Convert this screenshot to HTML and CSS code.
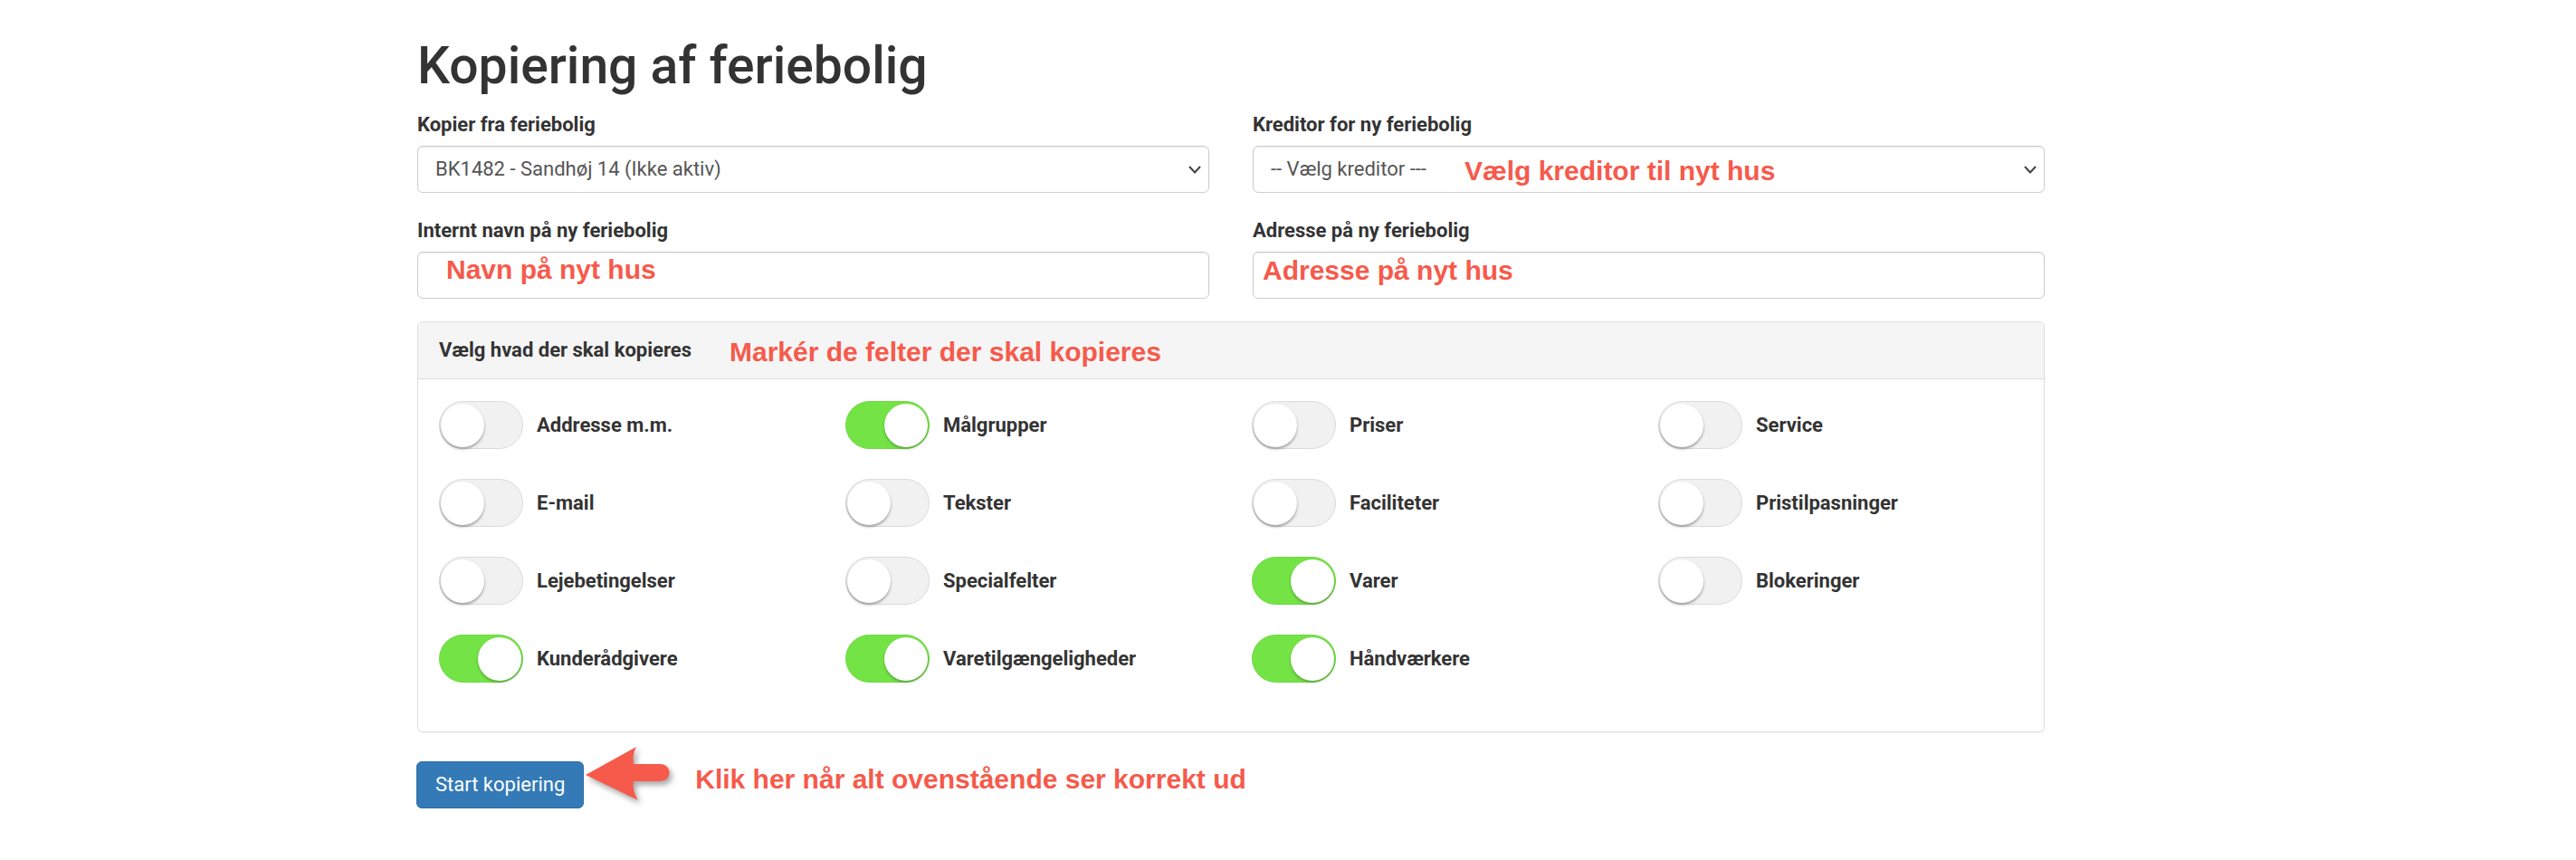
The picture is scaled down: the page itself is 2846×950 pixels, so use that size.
FILE: index.html
```html
<!DOCTYPE html>
<html lang="da">
<head>
<meta charset="utf-8">
<title>Kopiering af feriebolig</title>
<link rel="stylesheet" href="styles.css">
</head>
<body>
<div class="page">
  <h1 class="title">Kopiering af feriebolig</h1>

  <div class="form-grid">
    <div class="field">
      <div class="field-label">Kopier fra feriebolig</div>
      <div class="control select">
        <span class="value">BK1482 - Sandhøj 14 (Ikke aktiv)</span>
        <svg class="chevron" width="14" height="9" viewBox="0 0 14 9"><polyline points="1,1 7,7.5 13,1" fill="none" stroke="#444" stroke-width="2"/></svg>
      </div>
    </div>
    <div class="field">
      <div class="field-label">Kreditor for ny feriebolig</div>
      <div class="control select">
        <span class="value">-- Vælg kreditor ---</span>
        <svg class="chevron" width="14" height="9" viewBox="0 0 14 9"><polyline points="1,1 7,7.5 13,1" fill="none" stroke="#444" stroke-width="2"/></svg>
        <span class="note note-kreditor">Vælg kreditor til nyt hus</span>
      </div>
    </div>
    <div class="field">
      <div class="field-label">Internt navn på ny feriebolig</div>
      <div class="control">
        <span class="note note-navn">Navn på nyt hus</span>
      </div>
    </div>
    <div class="field">
      <div class="field-label">Adresse på ny feriebolig</div>
      <div class="control">
        <span class="note note-adresse">Adresse på nyt hus</span>
      </div>
    </div>
  </div>

  <section class="panel">
    <div class="panel-head">
      <span class="panel-title">Vælg hvad der skal kopieres</span>
      <span class="note note-head">Markér de felter der skal kopieres</span>
    </div>
    <div class="panel-body">
      <div class="opt"><span class="toggle"><span class="knob"></span></span><span class="opt-label">Addresse m.m.</span></div>
      <div class="opt"><span class="toggle on"><span class="knob"></span></span><span class="opt-label">Målgrupper</span></div>
      <div class="opt"><span class="toggle"><span class="knob"></span></span><span class="opt-label">Priser</span></div>
      <div class="opt"><span class="toggle"><span class="knob"></span></span><span class="opt-label">Service</span></div>

      <div class="opt"><span class="toggle"><span class="knob"></span></span><span class="opt-label">E-mail</span></div>
      <div class="opt"><span class="toggle"><span class="knob"></span></span><span class="opt-label">Tekster</span></div>
      <div class="opt"><span class="toggle"><span class="knob"></span></span><span class="opt-label">Faciliteter</span></div>
      <div class="opt"><span class="toggle"><span class="knob"></span></span><span class="opt-label">Pristilpasninger</span></div>

      <div class="opt"><span class="toggle"><span class="knob"></span></span><span class="opt-label">Lejebetingelser</span></div>
      <div class="opt"><span class="toggle"><span class="knob"></span></span><span class="opt-label">Specialfelter</span></div>
      <div class="opt"><span class="toggle on"><span class="knob"></span></span><span class="opt-label">Varer</span></div>
      <div class="opt"><span class="toggle"><span class="knob"></span></span><span class="opt-label">Blokeringer</span></div>

      <div class="opt"><span class="toggle on"><span class="knob"></span></span><span class="opt-label">Kunderådgivere</span></div>
      <div class="opt"><span class="toggle on"><span class="knob"></span></span><span class="opt-label">Varetilgængeligheder</span></div>
      <div class="opt"><span class="toggle on"><span class="knob"></span></span><span class="opt-label">Håndværkere</span></div>
    </div>
  </section>

  <div class="actions">
    <button class="btn-primary" type="button">Start kopiering</button>
    <svg class="arrow" width="100" height="75" viewBox="0 0 100 75">
      <path d="M2,34 L58,3 Q53,13 55,22 L85,22 A9.5,9.5 0 0 1 85,41 L55,41 Q53,51 60,62 Z" fill="#f65a4b"/>
    </svg>
    <span class="note note-action">Klik her når alt ovenstående ser korrekt ud</span>
  </div>
</div>
</body>
</html>
```

FILE: styles.css
```css
* { box-sizing: border-box; }

html, body {
  margin: 0;
  padding: 0;
  background: #fff;
}

body {
  font-family: Roboto, "Liberation Sans", sans-serif;
  color: #333;
  font-size: 22px;
  line-height: 30px;
}

.page {
  width: 1798px;
  margin-left: 461px;
}

.title {
  margin: 41px 0 0;
  font-size: 57px;
  line-height: 64px;
  font-weight: 500;
  color: #333;
}

.form-grid {
  margin-top: 18px;
  display: grid;
  grid-template-columns: 1fr 1fr;
  column-gap: 48px;
  row-gap: 27px;
}

.field-label {
  font-weight: 700;
  font-size: 22px;
  line-height: 30px;
  margin-bottom: 8px;
}

.control {
  position: relative;
  height: 52px;
  border: 1px solid #ccc;
  border-radius: 6px;
  background: #fff;
  box-shadow: inset 0 1px 1px rgba(0,0,0,.075);
  display: flex;
  align-items: center;
  padding: 0 8px 0 19px;
}

.select .value {
  flex: 1;
  color: #555;
  white-space: nowrap;
}

.chevron { display: block; flex: none; }

.note {
  font-family: "Liberation Sans", Arial, sans-serif;
  font-weight: 700;
  font-size: 30px;
  line-height: 30px;
  color: #f65a4b;
  white-space: nowrap;
}

.control .note { position: absolute; }
.note-kreditor { left: 233px; top: 12px; }
.note-navn { left: 31px; top: 4px; }
.note-adresse { left: 10px; top: 5px; }

.panel {
  margin-top: 25px;
  border: 1px solid #ddd;
  border-radius: 6px;
  box-shadow: 0 1px 1px rgba(0,0,0,.05);
  overflow: hidden;
}

.panel-head {
  position: relative;
  background: #f5f5f5;
  border-bottom: 1px solid #ddd;
  padding: 16px 23px;
  height: 63px;
}

.panel-title {
  font-weight: 700;
  font-size: 22px;
  line-height: 30px;
  color: #333;
}

.note-head {
  position: absolute;
  left: 344px;
  top: 18px;
}

.panel-body {
  display: grid;
  grid-template-columns: repeat(4, 1fr);
  row-gap: 33px;
  padding: 24px 0 54px;
}

.opt {
  display: flex;
  align-items: center;
  gap: 15px;
  padding-left: 23px;
}

.toggle {
  position: relative;
  flex: none;
  width: 93px;
  height: 53px;
  border-radius: 27px;
  background: #f1f1f1;
  border: 1px solid #dadada;
  display: flex;
  align-items: center;
  padding: 1px;
}

.knob {
  width: 48px;
  height: 48px;
  border-radius: 50%;
  background: #fff;
  box-shadow: 0 2px 3px rgba(0,0,0,.35);
}

.toggle.on {
  background: #74e346;
  border-color: #6ed843;
  justify-content: flex-end;
}

.toggle.on .knob {
  box-shadow: 0 2px 3px rgba(0,0,0,.25);
}

.opt-label {
  font-weight: 700;
  font-size: 22px;
  line-height: 30px;
  color: #333;
  white-space: nowrap;
}

.actions {
  display: flex;
  align-items: flex-start;
  margin-top: 13px;
}

.btn-primary {
  margin-top: 19px;
  margin-left: -1px;
  height: 52px;
  padding: 0 20px;
  font-family: Roboto, "Liberation Sans", sans-serif;
  font-size: 22px;
  line-height: 30px;
  color: #fff;
  background: #337ab7;
  border: 1px solid #2e6da4;
  border-radius: 6px;
}

.arrow {
  display: block;
  flex: none;
  filter: drop-shadow(3px 4px 3px rgba(0,0,0,.35));
}

.note-action {
  margin-left: 23px;
  margin-top: 24px;
}
```
